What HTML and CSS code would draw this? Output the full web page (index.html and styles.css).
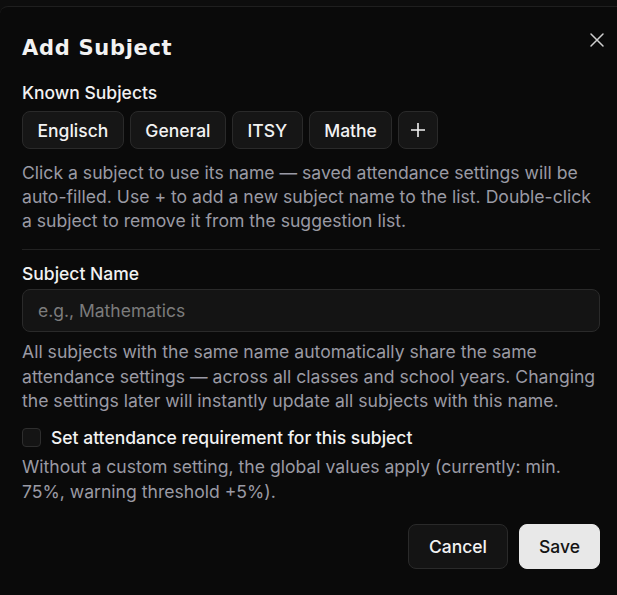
FILE: index.html
```html
<!DOCTYPE html>
<html lang="en">
<head>
  <meta charset="UTF-8">
  <title>Add Subject</title>
  <link rel="stylesheet" href="styles.css">
</head>
<body>

<div class="dialog">
  <button type="button" class="close" aria-label="Close">
    <svg width="16" height="16" viewBox="0 0 16 16"><path d="M2 2L14 14M14 2L2 14" stroke="#cfcfcf" stroke-width="1.5" stroke-linecap="round"/></svg>
  </button>

  <h2>Add Subject</h2>

  <label class="label">Known Subjects</label>
  <div class="chips">
    <button type="button" class="chip">Englisch</button>
    <button type="button" class="chip">General</button>
    <button type="button" class="chip">ITSY</button>
    <button type="button" class="chip">Mathe</button>
    <button type="button" class="chip add">
      <svg width="16" height="16" viewBox="0 0 16 16"><path d="M8 1V15M1 8H15" stroke="#f2f2f2" stroke-width="1.6"/></svg>
    </button>
  </div>
  <p class="hint first">Click a subject to use its name — saved attendance settings will be auto-filled. Use + to add a new subject name to the list. Double-click a subject to remove it from the suggestion list.</p>

  <hr>

  <label class="label name" for="subject_name">Subject Name</label>
  <input type="text" id="subject_name" placeholder="e.g., Mathematics">
  <p class="hint">All subjects with the same name automatically share the same attendance settings — across all classes and school years. Changing the settings later will instantly update all subjects with this name.</p>

  <label class="check"><span class="box"></span> Set attendance requirement for this subject</label>
  <p class="hint last">Without a custom setting, the global values apply (currently: min. 75%, warning threshold +5%).</p>

  <div class="actions">
    <button type="button" class="btn">Cancel</button>
    <button type="button" class="btn primary">Save</button>
  </div>
</div>

</body>
</html>
```

FILE: styles.css
```css
html, body {
  height: 100%;
  overflow: hidden;
}
body {
  margin: 0;
  background: #0d0d0d;
  font-family: Inter, "Liberation Sans", sans-serif;
  color: #f2f2f2;
}
.dialog {
  position: relative;
  box-sizing: border-box;
  height: calc(100% - 6px);
  margin-top: 6px;
  border-top: 1px solid #1f1f1f;
  border-top-left-radius: 8px;
  background: #0a0a0a;
  padding: 27px 17px 0 22px;
}
.close {
  position: absolute;
  top: 25px;
  right: 12px;
  background: none;
  border: none;
  padding: 0;
}
h2 {
  margin: 0;
  font-family: "DejaVu Sans", sans-serif;
  font-size: 21px;
  line-height: 28px;
  font-weight: bold;
  letter-spacing: 0.7px;
}
.label {
  display: block;
  margin-top: 19px;
  font-size: 17.5px;
  line-height: 24px;
  font-weight: 500;
}
.label.name {
  margin-top: 12px;
}
.chips {
  display: flex;
  gap: 6px;
  margin-top: 6px;
}
.chip {
  height: 38px;
  padding: 0 14.5px;
  background: #161616;
  border: 1px solid #2a2a2a;
  border-radius: 8px;
  color: #f2f2f2;
  font-family: inherit;
  font-size: 17.5px;
  font-weight: 500;
}
.chip.add {
  padding: 0 11px;
  display: flex;
  align-items: center;
}
.hint {
  margin: 8px 0 0;
  font-size: 17.6px;
  line-height: 24.5px;
  color: #9a9aa4;
}
.hint.first {
  margin-top: 12px;
  line-height: 24px;
}
.hint.last {
  margin-top: 4px;
  line-height: 25px;
}
hr {
  border: none;
  border-top: 1px solid #222;
  margin: 16px 0 0;
}
input {
  display: block;
  box-sizing: border-box;
  width: 100%;
  height: 43px;
  margin-top: 3px;
  padding: 0 15px;
  background: #141414;
  border: 1px solid #2a2a2a;
  border-radius: 8px;
  color: #f2f2f2;
  font-family: inherit;
  font-size: 17.5px;
}
input::placeholder {
  color: #7c7c7c;
}
.check {
  display: flex;
  align-items: center;
  gap: 10px;
  margin-top: 12px;
  font-size: 17.5px;
  line-height: 24px;
  font-weight: 500;
}
.box {
  width: 19px;
  height: 19px;
  box-sizing: border-box;
  border: 1px solid #2e2e2e;
  border-radius: 4px;
  background: #141414;
}
.actions {
  display: flex;
  justify-content: flex-end;
  gap: 11px;
  margin-top: 20px;
}
.btn {
  height: 45px;
  padding: 0 20px;
  background: #141414;
  border: 1px solid #2a2a2a;
  border-radius: 8px;
  color: #f2f2f2;
  font-family: inherit;
  font-size: 17.5px;
  font-weight: 500;
}
.btn.primary {
  padding: 0 19px;
  background: #e8e8e8;
  border-color: #e8e8e8;
  color: #141414;
}
```
